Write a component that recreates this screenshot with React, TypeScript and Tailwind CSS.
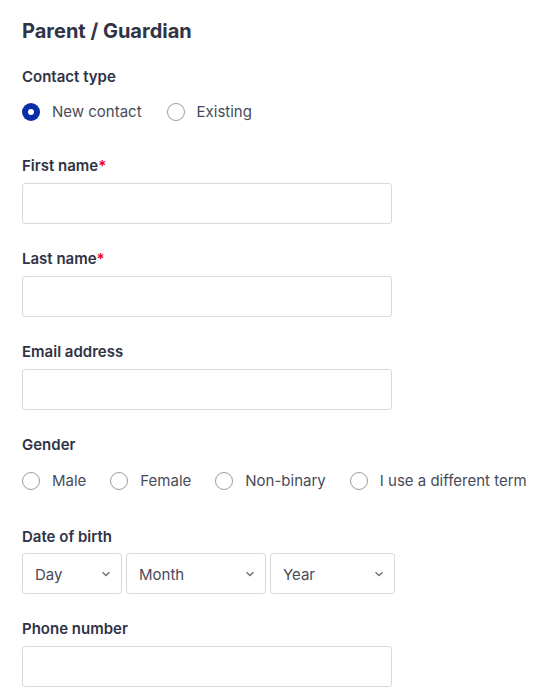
import React from "react";

function Radio({ label, checked }: { label: string; checked?: boolean }) {
  return (
    <label className="flex items-center gap-3 h-6">
      {checked ? (
        <span className="w-[18px] h-[18px] rounded-full bg-[#0b2fa6] flex items-center justify-center">
          <span className="w-[6px] h-[6px] rounded-full bg-white" />
        </span>
      ) : (
        <span className="w-[18px] h-[18px] rounded-full border border-[#9a9ca3] bg-white" />
      )}
      <span className="text-[15px] text-[#474b58]">{label}</span>
    </label>
  );
}

function Label({ children, required }: { children: React.ReactNode; required?: boolean }) {
  return (
    <div className="text-[15px] leading-5 font-semibold text-[#2f3345]">
      {children}
      {required && <span className="text-[#e4001b]">*</span>}
    </div>
  );
}

function Input() {
  return <div className="mt-[7px] w-[370px] h-[41px] rounded-[3px] border border-[#d8d9dc] bg-white" />;
}

function Select({ label, w }: { label: string; w: string }) {
  return (
    <div className={`${w} h-[41px] rounded-[3px] border border-[#d8d9dc] bg-white flex items-center justify-between pl-3 pr-[10px] pt-[3px]`}>
      <span className="text-[15px] text-[#474b58]">{label}</span>
      <svg width="10" height="6" viewBox="0 0 10 6" fill="none" className="-mt-[3px]">
        <path d="M1.5 1.2 L5 4.6 L8.5 1.2" stroke="#6e7180" strokeWidth="1.4" />
      </svg>
    </div>
  );
}

export default function App() {
  return (
    <div className="bg-white min-h-[700px] pl-[22px] pt-[17px]" style={{ fontFamily: "Inter, 'Noto Sans', sans-serif" }}>
      <h1 className="text-[20px] leading-7 font-bold text-[#2f3345]">Parent / Guardian</h1>

      <div className="mt-[22px]">
        <Label>Contact type</Label>
        <div className="mt-[13px] flex gap-[25px]">
          <Radio label="New contact" checked />
          <Radio label="Existing" />
        </div>
      </div>

      <div className="mt-[32px]">
        <Label required>First name</Label>
        <Input />
      </div>
      <div className="mt-[25px]">
        <Label required>Last name</Label>
        <Input />
      </div>
      <div className="mt-[25px]">
        <Label>Email address</Label>
        <Input />
      </div>

      <div className="mt-[25px]">
        <Label>Gender</Label>
        <div className="mt-[14px] flex gap-[24px]">
          <Radio label="Male" />
          <Radio label="Female" />
          <Radio label="Non-binary" />
          <Radio label="I use a different term" />
        </div>
      </div>

      <div className="mt-[34px]">
        <Label>Date of birth</Label>
        <div className="mt-[6px] flex gap-[4px]">
          <Select label="Day" w="w-[100px]" />
          <Select label="Month" w="w-[140px]" />
          <Select label="Year" w="w-[125px]" />
        </div>
      </div>

      <div className="mt-[25px]">
        <Label>Phone number</Label>
        <Input />
      </div>
    </div>
  );
}
